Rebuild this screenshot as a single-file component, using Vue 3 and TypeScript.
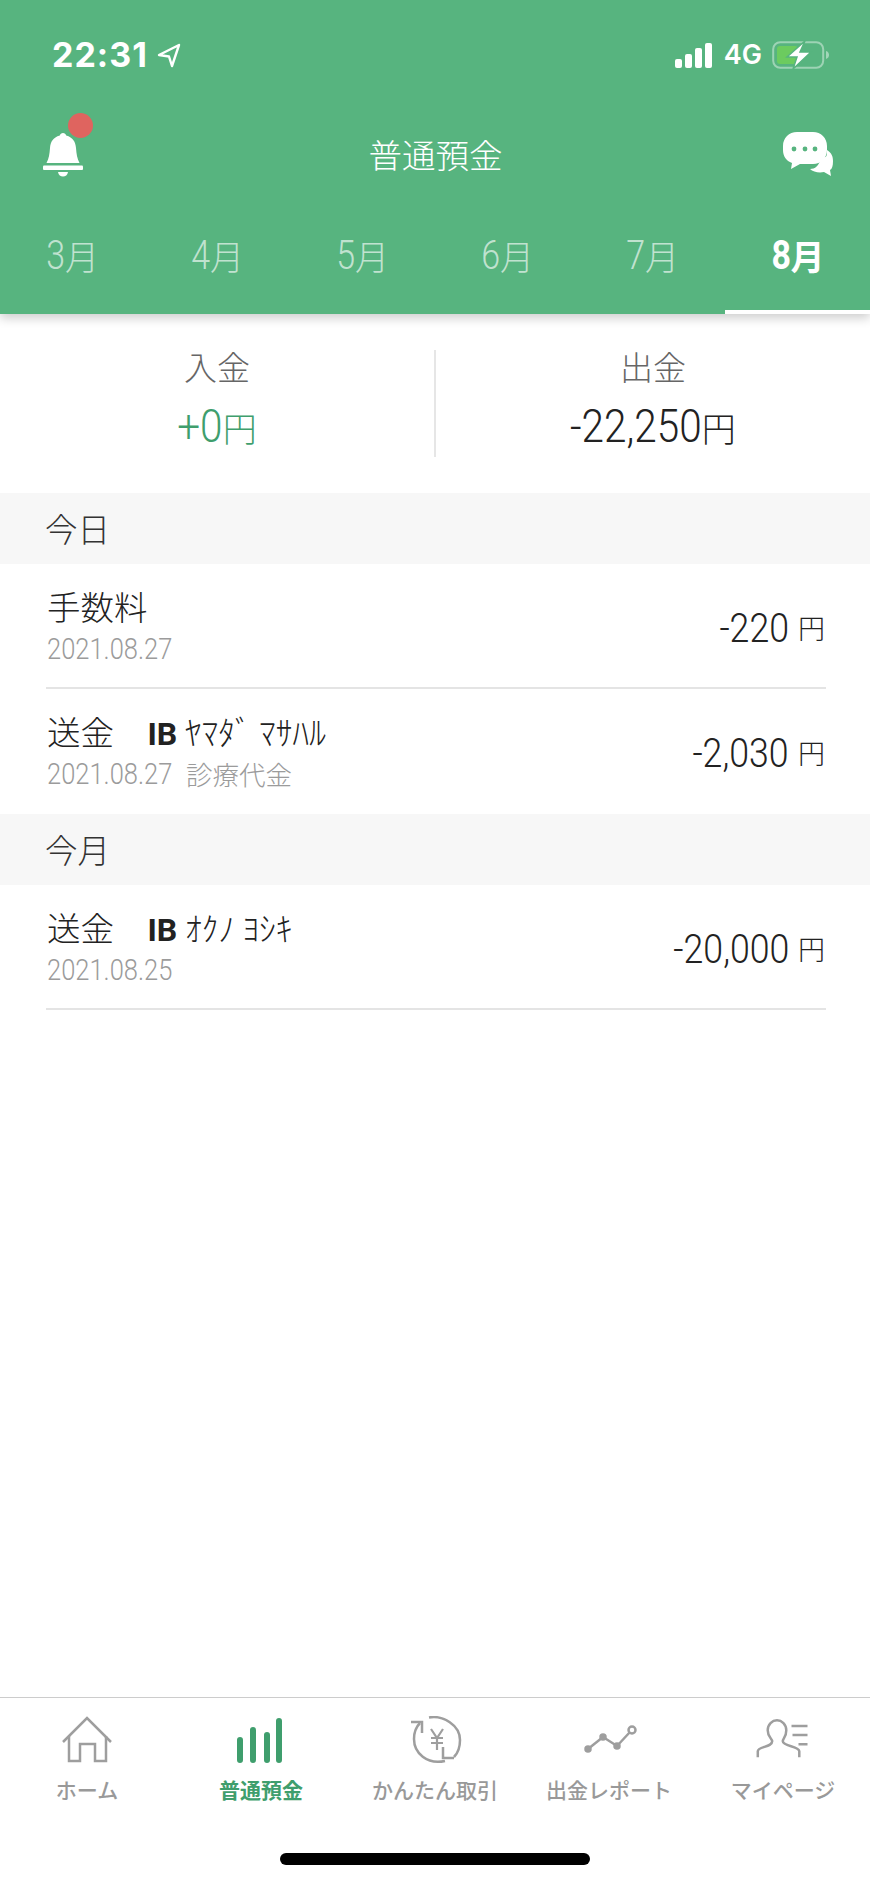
<script setup lang="ts">
const months = ['3', '4', '5', '6', '7', '8']

const sections = [
  {
    label: '今日',
    rows: [
      { id: 1, title: '手数料', ib: '', kana: '', date: '2021.08.27', memo: '', amount: '-220' },
      { id: 2, title: '送金', ib: 'IB', kana: 'ﾔﾏﾀﾞ ﾏｻﾊﾙ', date: '2021.08.27', memo: '診療代金', amount: '-2,030' },
    ],
  },
  {
    label: '今月',
    rows: [
      { id: 3, title: '送金', ib: 'IB', kana: 'ｵｸﾉ ﾖｼｷ', date: '2021.08.25', memo: '', amount: '-20,000' },
    ],
  },
]
</script>

<template>
  <div class="page">
    <header class="header">
      <div class="status">
        <div class="status-left">
          <span class="time">22:31</span>
          <svg class="arrow" width="24" height="25" viewBox="0 0 24 25">
            <path d="M22 2 2 12l10 1.500L15 23z" fill="none" stroke="#fff" stroke-width="2.400" stroke-linejoin="round" />
          </svg>
        </div>
        <div class="status-right">
          <div class="signal">
            <i class="s1"></i><i class="s2"></i><i class="s3"></i><i class="s4"></i>
          </div>
          <span class="net">4G</span>
          <svg class="battery" width="58" height="28" viewBox="0 0 58 28">
            <rect x="1.200" y="1.200" width="50" height="25.600" rx="7" fill="none" stroke="#fff" stroke-opacity=".42" stroke-width="2" />
            <rect x="5" y="5" width="21" height="18" rx="3" fill="#6ccb5f" />
            <path d="M54 10c2 .6 3 2.200 3 4s-1 3.400-3 4z" fill="#fff" fill-opacity=".45" />
            <path d="M33 0 15 16h10l-4 12 18-17H28z" fill="#fff" stroke="#57b47f" stroke-width="1.500" />
          </svg>
        </div>
      </div>

      <div class="nav">
        <div class="bell">
          <svg width="40" height="45" viewBox="0 0 40 45">
            <path d="M20 1c1.600 0 2.800 1 3.200 2.600C30 5.600 32.500 10 33 16c.5 6 1 10.500 3.500 15h-33C6 26.500 6.500 22 7 16c.5-6 3-10.400 9.800-12.400C17.200 2 18.400 1 20 1z" fill="#fff" />
            <rect x="0" y="33.500" width="40" height="4.500" rx="1" fill="#fff" />
            <path d="M15 40h10c-.5 3-2.500 4.500-5 4.500s-4.500-1.500-5-4.500z" fill="#fff" />
          </svg>
          <span class="badge"></span>
        </div>
        <h1 class="title">普通預金</h1>
        <svg class="chat" width="50" height="44" viewBox="0 0 50 44">
          <path d="M38 26c6-1 6-1 6-8 5 3 6 7 6 11 0 5-1 8-3 9l1 6-7-4c-5 1-11 0-14-3 5 0 9-3 11-11z" fill="#fff" />
          <path d="M14 0h16c8 0 14 6 14 14v4c0 8-6 14-14 14H17l-9 5 1-6C3 29 0 24 0 18v-4C0 6 6 0 14 0z" fill="#fff" />
          <circle cx="11" cy="17" r="2.400" fill="#57b47f" />
          <circle cx="22" cy="17" r="2.400" fill="#57b47f" />
          <circle cx="32" cy="17" r="2.400" fill="#57b47f" />
        </svg>
      </div>

      <div class="tabs">
        <div v-for="m in months" :key="m" class="tab" :class="{ active: m === '8' }">
          <span class="tab-num">{{ m }}</span>月
        </div>
      </div>
    </header>

    <section class="stats">
      <div class="stat">
        <div class="stat-label">入金</div>
        <div class="stat-value plus"><span class="num stat-num short">+0</span>円</div>
      </div>
      <div class="stat stat-right">
        <div class="stat-label">出金</div>
        <div class="stat-value"><span class="num stat-num long">-22,250</span>円</div>
      </div>
    </section>

    <main class="list">
      <template v-for="sec in sections" :key="sec.label">
        <div class="band">{{ sec.label }}</div>
        <div v-for="row in sec.rows" :key="row.id" class="row" :class="{ ruled: row.id !== 2 }">
          <div class="info">
            <div class="row-title">{{ row.title }}<template v-if="row.ib">　<b class="ib">{{ row.ib }}</b> {{ row.kana }}</template></div>
            <div class="row-sub"><span class="num date">{{ row.date }}</span><span v-if="row.memo" class="memo">{{ row.memo }}</span></div>
          </div>
          <div class="amount"><span class="num amount-num">{{ row.amount }}</span><span class="yen">円</span></div>
        </div>
      </template>
    </main>

    <footer class="tabbar">
      <div class="tabbar-items">
        <div class="item">
          <svg width="60" height="50" viewBox="0 0 60 50" fill="none" stroke="#9e9e9e" stroke-width="2.500">
            <path d="M6 26 30 2l24 24" />
            <path d="M12 20v25h11V28h15v17h11V20" />
          </svg>
          <span>ホーム</span>
        </div>
        <div class="item on">
          <svg width="60" height="50" viewBox="0 0 60 50" fill="none" stroke="#3f9e6d" stroke-width="6" stroke-linecap="round">
            <path d="M9 24v20M22 14v30M36 19v25M48 5v39" />
          </svg>
          <span>普通預金</span>
        </div>
        <div class="item">
          <svg width="60" height="50" viewBox="0 0 60 50" fill="none" stroke="#9e9e9e" stroke-width="2.500">
            <path d="M24 1.500C38 -1 55 9 55 24c0 7-2 13-6 17" />
            <path d="M40 45C22 49 9 37 9 23c0-7 2-12 6-16" />
            <path d="M6 6h11v11M38 31v11h11" />
            <path d="M26 13l6 9 6-9M32 22v12M26 22h12M26 27h12" stroke-width="2.200" />
          </svg>
          <span>かんたん取引</span>
        </div>
        <div class="item">
          <svg width="60" height="50" viewBox="0 0 60 50" fill="#9e9e9e" stroke="#9e9e9e" stroke-width="2.500">
            <path d="M9 33 24 21l14 9 13-14" fill="none" />
            <circle cx="9" cy="33" r="2.500" />
            <circle cx="24" cy="21" r="2.500" />
            <circle cx="38" cy="30" r="2.500" />
            <circle cx="53" cy="14" r="3.500" fill="#fff" />
          </svg>
          <span>出金レポート</span>
        </div>
        <div class="item">
          <svg width="60" height="50" viewBox="1.500 0 60 50" fill="none" stroke="#9e9e9e" stroke-width="2.500">
            <path d="M6.300 41.300v-6c0-5 14.400-4 14.400-10 0-3-4.500-4-4.500-11 0-6 4.500-10 9.300-10s9.300 4 9.300 10c0 7-3.500 8-3.500 11 0 5 16.500 5 16.500 10v6" />
            <path d="M40 10h16M41 19h15M47 28.300h9" />
          </svg>
          <span>マイページ</span>
        </div>
      </div>
      <div class="home-bar"></div>
    </footer>
  </div>
</template>

<style scoped>
.page {
  width: 870px;
  height: 1883px;
  display: flex;
  flex-direction: column;
  background: #fff;
  color: #222;
  font-family: "Noto Sans CJK JP", "Noto Sans", sans-serif;
  font-weight: 300;
  overflow: hidden;
}

.header {
  background: #57b47f;
  color: #fff;
  height: 314px;
  box-shadow: 0 4px 10px rgba(0, 0, 0, 0.2);
  position: relative;
  flex: none;
}
.status {
  display: flex;
  justify-content: space-between;
  padding: 42px 40px 0 52px;
  height: 26px;
}
.status-left {
  display: flex;
  align-items: center;
  gap: 9px;
}
.time {
  font-family: Inter, sans-serif;
  font-weight: 700;
  font-size: 34px;
  letter-spacing: 1px;
  line-height: 26px;
}
.status-right {
  display: flex;
  align-items: center;
}
.signal {
  display: flex;
  align-items: flex-end;
  gap: 3px;
  height: 25px;
}
.signal i {
  width: 7px;
  background: #fff;
  border-radius: 2px;
}
.s1 { height: 9px; }
.s2 { height: 14px; }
.s3 { height: 20px; }
.s4 { height: 25px; }
.net {
  font-family: Inter, sans-serif;
  font-weight: 600;
  font-size: 27px;
  line-height: 26px;
  margin: 0 10px 0 12px;
}
.nav {
  display: flex;
  justify-content: space-between;
  align-items: center;
  height: 92px;
  padding: 40px 37px 0 43px;
}
.bell {
  position: relative;
  height: 45px;
}
.badge {
  position: absolute;
  left: 25px;
  top: -19px;
  width: 25px;
  height: 25px;
  border-radius: 50%;
  background: #df645f;
}
.title {
  margin: 0 0 0 5px;
  font-size: 33.500px;
  font-weight: 300;
  line-height: 44px;
}
.tabs {
  display: flex;
  height: 114px;
}
.tab {
  flex: 1;
  display: flex;
  justify-content: center;
  align-items: center;
  padding-bottom: 4px;
  font-size: 34px;
  color: rgba(255, 255, 255, 0.64);
}
.tab-num {
  font-family: Roboto, sans-serif;
  font-size: 40px;
  font-weight: 300;
  display: inline-block;
  transform: scaleX(0.85);
  transform-origin: right center;
  margin-left: -3px;
}
.tab.active {
  color: #fff;
  font-weight: 700;
  box-shadow: inset 0 -4px 0 #fff;
}
.tab.active .tab-num {
  font-weight: 700;
}

.num {
  font-family: Roboto, sans-serif;
  font-weight: 300;
  display: inline-block;
  transform: scaleX(0.87);
  transform-origin: right center;
}

.stats {
  display: flex;
  padding: 36px 0;
  flex: none;
}
.stat {
  flex: 1;
  height: 107px;
  text-align: center;
}
.stat-right {
  border-left: 2px solid #e6e6e6;
}
.stat-label {
  font-size: 33px;
  line-height: 32px;
  color: #666;
}
.stat-value {
  font-size: 34px;
  line-height: 48px;
  margin-top: 20px;
  color: #222;
}
.stat-value.plus {
  color: #3f9e6d;
}
.stat-num {
  font-size: 46px;
  transform: scaleX(0.88);
}
.short {
  margin-left: -6px;
}
.long {
  margin-left: -18px;
}

.list {
  flex: 1;
}
.band {
  height: 71px;
  line-height: 69px;
  background: #f7f7f7;
  font-size: 32.500px;
  padding-left: 45px;
  color: #333;
}
.row {
  height: 125px;
  box-sizing: border-box;
  margin: 0 44px 0 46px;
  display: flex;
  justify-content: space-between;
  align-items: flex-start;
}
.row.ruled {
  border-bottom: 2px solid #e4e4e4;
}
.info {
  padding: 22px 0 0 1px;
}
.row-title {
  font-size: 33.500px;
  line-height: 40px;
  height: 40px;
  white-space: pre;
  color: #222;
}
.ib {
  font-family: Roboto, sans-serif;
  font-weight: 700;
  font-size: 32px;
  line-height: 1;
}
.row-sub {
  height: 40px;
  margin-top: 3px;
  line-height: 40px;
  font-size: 26.500px;
  color: #9b9b9b;
  display: flex;
  align-items: center;
}
.date {
  font-size: 30px;
  transform: scaleX(0.85);
  transform-origin: left center;
  width: 125px;
  white-space: nowrap;
}
.memo {
  margin-left: 14px;
}
.amount {
  display: flex;
  align-items: center;
  height: 125px;
  margin-top: 1px;
  color: #222;
}
.amount-num {
  font-size: 41px;
}
.yen {
  font-size: 27px;
  margin: 0 1px 0 9px;
}

.tabbar {
  flex: none;
  border-top: 1px solid #ccc;
  height: 185px;
  box-sizing: content-box;
}
.tabbar-items {
  display: flex;
  padding-top: 18px;
}
.item {
  flex: 1;
  display: flex;
  flex-direction: column;
  align-items: center;
  font-size: 21px;
  font-weight: 500;
  line-height: 28px;
  color: #999;
}
.item svg {
  display: block;
  margin-bottom: 9px;
}
.item.on {
  color: #3f9e6d;
  font-weight: 700;
}
.home-bar {
  width: 310px;
  height: 12px;
  border-radius: 6px;
  background: #000;
  margin: 50px auto 0;
}
</style>
